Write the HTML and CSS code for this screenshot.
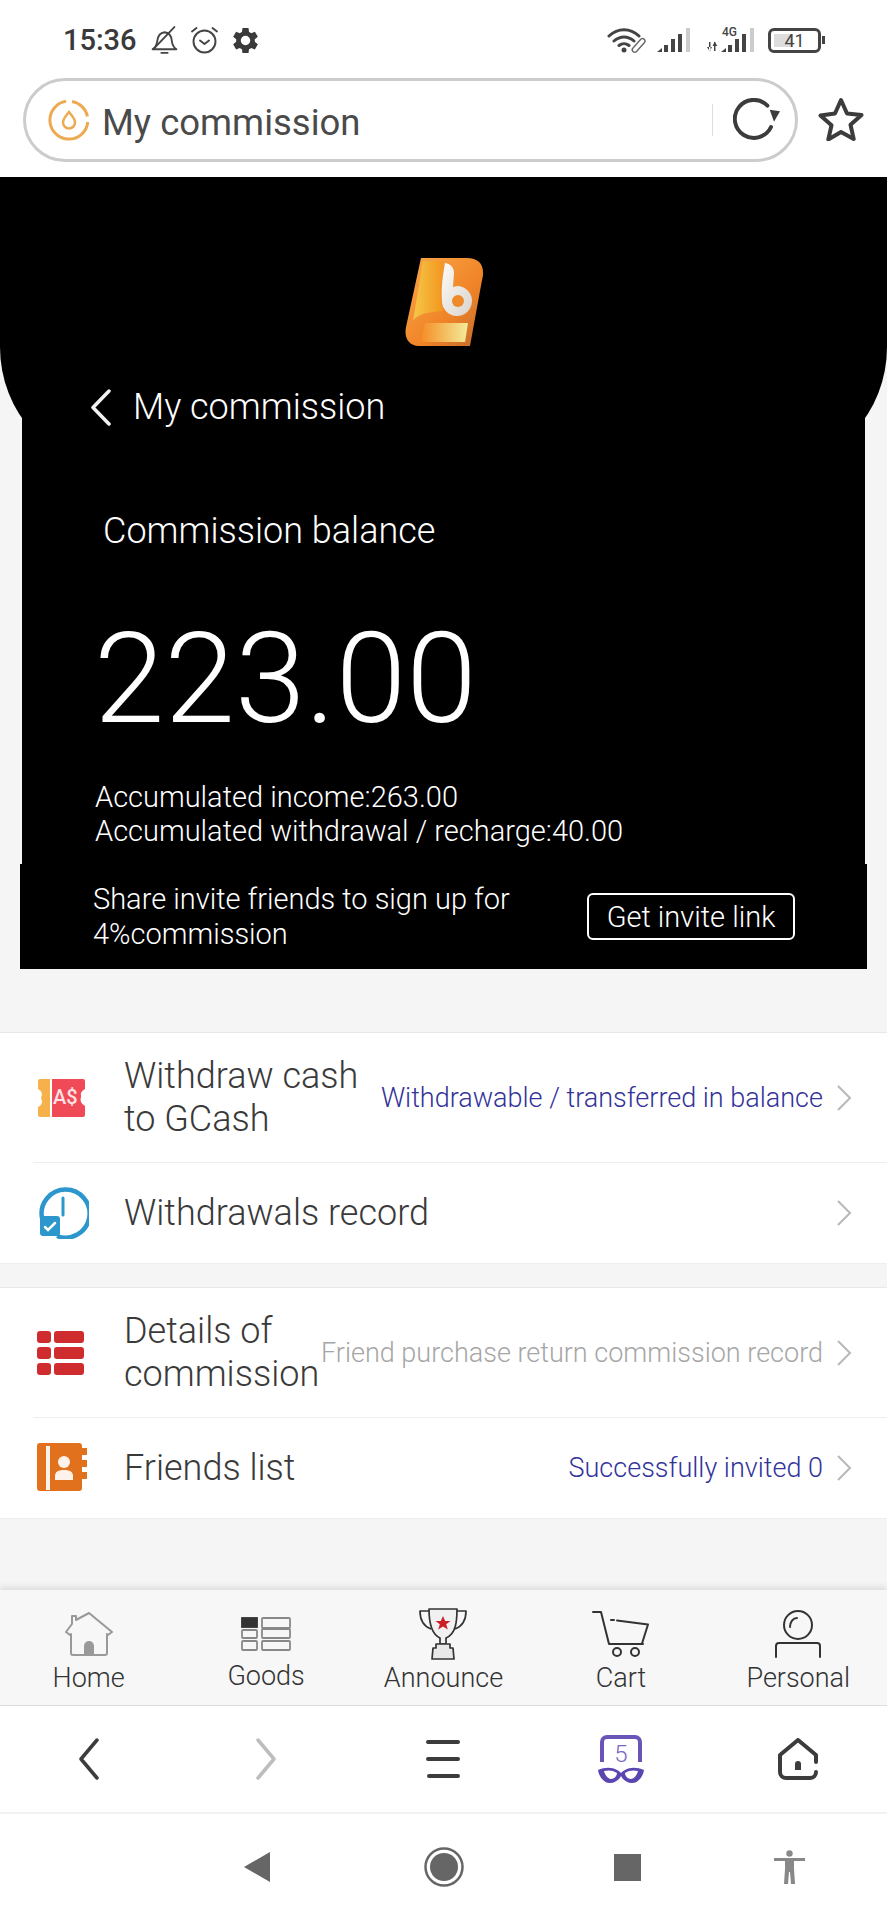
FILE: index.html
```html
<!DOCTYPE html>
<html lang="en">
<head>
    <meta charset="UTF-8">
    <meta name="viewport" content="width=device-width, initial-scale=1.0">
    <title>My commission</title>
    <link rel="stylesheet" href="styles.css">
</head>
<body>
    <div class="status-bar">
        <span class="clock">15:36</span>
        <svg class="st-bell" width="29" height="29" viewBox="1 0 25 28" fill="none" stroke="#444" stroke-width="1.800" stroke-linejoin="round" stroke-linecap="round"><path d="M2 22.500c3-2 4-4 4.500-8 .6-5 3-8 7-8.500 4 .3 6.500 3 7 8 .4 4 1.500 6.500 4.500 8.500z"/><path d="M23 1 3 22"/><path d="M10.500 26h6"/></svg>
        <svg class="st-alarm" width="29" height="28" viewBox="1 0 27 28" fill="none" stroke="#444" stroke-width="1.900" stroke-linecap="round" stroke-linejoin="round"><circle cx="14.500" cy="15.500" r="11"/><path d="m10 14.500 4.500 3.500 4.500-3.500"/><path d="M2 5.500 6.500 2M27 5.500 22.500 2"/></svg>
        <svg class="st-gear" width="25" height="25" viewBox="2 2 20 20"><path fill="#3a3a3a" fill-rule="evenodd" d="M19.400 13c.04-.33.06-.66.06-1s-.02-.67-.06-1l2.500-1.950-2.400-4.150-2.950 1.200a7.600 7.600 0 0 0-1.730-1L14.400 2H9.600l-.42 3.100a7.600 7.600 0 0 0-1.730 1L4.500 4.900 2.100 9.050 4.600 11a8 8 0 0 0 0 2l-2.500 1.950 2.400 4.150 2.950-1.200c.53.4 1.110.74 1.730 1L9.600 22h4.800l.42-3.100c.62-.26 1.200-.6 1.730-1l2.950 1.200 2.400-4.150zM12 15.800a3.800 3.800 0 1 1 0-7.600 3.800 3.800 0 0 1 0 7.600z"/></svg>
        <span class="status-right">
            <svg width="40" height="26" viewBox="0 0 40 26" fill="none" stroke="#444" stroke-linecap="round"><path stroke-width="3" d="M2 9c9-8.500 21-8.500 30 0M7 14c6-5.500 14-5.500 20 0M12 18.500c3-2.500 7-2.500 10 0"/><circle cx="17" cy="23" r="2.500" fill="#444" stroke="none"/><path stroke-width="1.400" stroke="#666" d="m27 24 8-9a2.500 2.500 0 0 1 3.500 3.500l-8 9a2 2 0 0 1-3.500-3.500z" transform="translate(-1 -3)"/></svg>
            <svg class="st-signal" width="34" height="25" viewBox="0 0 34 25"><path fill="#444" d="M0 24l5-4v4zM7 17h4v7H7zM14 11h4v13h-4zM21 6h4v18h-4z"/><path fill="#ccc" d="M29 0h4v24h-4z"/></svg>
            <span class="net-group">
                <span class="net-label">4G</span>
                <svg width="48" height="25" viewBox="0 0 48 25"><path fill="#444" d="M2 14h1.500v9H2zM0 19l2.700 4.500L5 19zM7 14h1.500v9H7zM5.500 18l2.300-4.500 2.500 4.500zM14 24l5-4v4zM21 17h4v7h-4zM28 11h4v13h-4zM35 6h4v18h-4z"/><path fill="#ccc" d="M43 0h4v24h-4z"/></svg>
            </span>
            <span class="battery"><span class="battery-fill"></span><span class="battery-num">41</span></span>
            <span class="battery-nub"></span>
        </span>
    </div>

    <div class="url-row">
        <div class="url-pill">
            <svg class="url-icon" width="42" height="42" viewBox="0 0 42 42" fill="none" stroke="#edaa52"><path stroke-width="3" d="M24 2.500a19 19 0 0 1 15.500 15M39.800 23A19 19 0 1 1 18 2.300"/><path stroke-width="2.500" d="M21 13c3 4 6 6.500 6 10.500a6 6 0 0 1-12 0C15 19.500 18 17 21 13z"/></svg>
            <span class="url-text">My commission</span>
            <span class="url-divider"></span>
            <svg class="url-reload" width="48" height="44" viewBox="0 0 48 44" fill="none" stroke="#3c3c3c" stroke-width="4" stroke-linecap="round"><path d="M38 29A19 19 0 1 1 34.400 7.600"/><path fill="#3c3c3c" stroke="none" d="M36.700 11.700 47 13.300 41 23.700z"/></svg>
        </div>
        <svg class="url-star" width="46" height="44" viewBox="0 0 46 44" fill="none" stroke="#3c3c3c" stroke-width="4" stroke-linejoin="round"><path d="m23 3 6 13.500 14.500 1.500-11 9.800 3.200 14.200L23 35l-12.700 7.500 3.200-14.200-11-9.800L17 16.500z"/></svg>
    </div>

    <div class="hero">
        <svg class="hero-logo" width="79" height="90" viewBox="0 0 79 90">
            <defs>
                <linearGradient id="logoBase" x1="0" y1="0" x2="1" y2="1"><stop offset="0" stop-color="#f9a94a"/><stop offset=".6" stop-color="#f08427"/><stop offset="1" stop-color="#c26a2c"/></linearGradient>
                <linearGradient id="logoCol" x1="0" y1="0" x2="1" y2="0"><stop offset="0" stop-color="#f6c848"/><stop offset="1" stop-color="#f2961f"/></linearGradient>
                <linearGradient id="logoBand" x1="0" y1="0" x2="1" y2="0"><stop offset="0" stop-color="#f58d25"/><stop offset="1" stop-color="#f3ec9a"/></linearGradient>
                <linearGradient id="logoB" x1="0" y1="0" x2="1" y2="1"><stop offset="0" stop-color="#fdfcf9"/><stop offset="1" stop-color="#d9d3cc"/></linearGradient>
            </defs>
            <path fill="url(#logoBase)" d="M16 1h46c11 0 17 6 16 17l-3 16-10 55H14C3 89-1 80 1 70z"/>
            <path fill="url(#logoCol)" d="M18 4h20c-3 20-4 36 0 50-14 1-26 3-30 10z"/>
            <path fill="url(#logoBand)" d="M20 66h43l-3 19H16z"/>
            <path fill="url(#logoB)" d="M40 6c6 1 9 5 9 10l-1 14c1 0 3-1 5-1a15 15 0 1 1-16 15C36 30 38 18 40 6z"/>
            <circle cx="53" cy="44" r="6" fill="#ee8a2a"/>
        </svg>
        <div class="hero-title">
            <svg width="22" height="37" viewBox="0 0 22 37" fill="none" stroke="#f2f2f2" stroke-width="3.500" stroke-linecap="round" stroke-linejoin="round"><path d="M19 2 3 18.500 19 35"/></svg>
            <span>My commission</span>
        </div>
        <div class="balance-label">Commission balance</div>
        <div class="balance-num">223.00</div>
        <div class="balance-sub">
            <div>Accumulated income:263.00</div>
            <div>Accumulated withdrawal / recharge:40.00</div>
        </div>
    </div>
    <div class="invite">
        <div class="invite-text">Share invite friends to sign up for 4%commission</div>
        <div class="invite-btn">Get invite link</div>
    </div>

    <main class="lists">
        <section class="group">
            <div class="row">
                <div class="row-icon">
                    <svg width="50" height="38" viewBox="0 0 50 38">
                        <path fill="#f7b14a" d="M3 0h10v38H3a2 2 0 0 1-2-2v-8a6 6 0 0 0 3-9 6 6 0 0 0-3-9V2a2 2 0 0 1 2-2z"/>
                        <path fill="#f04a58" d="M15 0h31a2 2 0 0 1 2 2v8a7 7 0 0 0-4 8 7 7 0 0 0 4 9v9a2 2 0 0 1-2 2H15z"/>
                        <text class="ticket-text" x="16" y="25">A$</text>
                    </svg>
                </div>
                <div class="row-title">Withdraw cash to GCash</div>
                <div class="row-note note-blue">Withdrawable / transferred in balance</div>
                <svg class="chev" width="16" height="26" viewBox="0 0 16 26" fill="none" stroke="#b8b8b8" stroke-width="2"><path d="m2 1 12 12L2 25"/></svg>
            </div>
            <div class="row">
                <div class="row-icon">
                    <svg width="52" height="52" viewBox="0 0 52 52" fill="none">
                        <path stroke="#2b97cd" stroke-width="4.500" d="M5 31A24 24 0 1 1 20 49"/>
                        <path stroke="#2b97cd" stroke-width="3" stroke-linecap="round" d="M26 11v17"/>
                        <rect x="3" y="29" width="20" height="20" rx="3" fill="#2b97cd"/>
                        <path stroke="#fff" stroke-width="2.500" stroke-linecap="round" d="m8 40 3 3 7-7"/>
                    </svg>
                </div>
                <div class="row-title">Withdrawals record</div>
                <svg class="chev" width="16" height="26" viewBox="0 0 16 26" fill="none" stroke="#b8b8b8" stroke-width="2"><path d="m2 1 12 12L2 25"/></svg>
            </div>
        </section>
        <section class="group">
            <div class="row">
                <div class="row-icon">
                    <svg width="47" height="44" viewBox="0 0 47 44" fill="#cf2c2f">
                        <rect width="14" height="12" rx="3"/><rect x="17" width="30" height="12" rx="3"/>
                        <rect y="16" width="14" height="12" rx="3"/><rect x="17" y="16" width="30" height="12" rx="3"/>
                        <rect y="32" width="14" height="12" rx="3"/><rect x="17" y="32" width="30" height="12" rx="3"/>
                    </svg>
                </div>
                <div class="row-title">Details of commission</div>
                <div class="row-note note-gray">Friend purchase return commission record</div>
                <svg class="chev" width="16" height="26" viewBox="0 0 16 26" fill="none" stroke="#b8b8b8" stroke-width="2"><path d="m2 1 12 12L2 25"/></svg>
            </div>
            <div class="row">
                <div class="row-icon">
                    <svg width="50" height="50" viewBox="0 0 50 50">
                        <path fill="#e2711d" d="M3 0h39a3 3 0 0 1 3 3v2h5v7h-5v5h5v7h-5v5h5v7h-5v9a3 3 0 0 1-3 3H3a3 3 0 0 1-3-3V3a3 3 0 0 1 3-3z"/>
                        <path fill="#fdf3ea" d="M9 3h4v44H9z"/>
                        <circle cx="27" cy="19" r="6" fill="#fdf3ea"/>
                        <path fill="#fdf3ea" d="M18 37v-4c0-4 3-6 9-6s9 2 9 6v4z"/>
                    </svg>
                </div>
                <div class="row-title">Friends list</div>
                <div class="row-note note-blue">Successfully invited 0</div>
                <svg class="chev" width="16" height="26" viewBox="0 0 16 26" fill="none" stroke="#b8b8b8" stroke-width="2"><path d="m2 1 12 12L2 25"/></svg>
            </div>
        </section>
    </main>

    <nav class="tabbar">
        <div class="tab">
            <div class="tab-icon">
                <svg width="48" height="44" viewBox="0 0 48 44" fill="none" stroke="#999" stroke-width="2" stroke-linejoin="round" stroke-linecap="round"><path d="M7 12V4h4v4L24 1l23 19-4 3-1-1v19a2 2 0 0 1-2 2H8a2 2 0 0 1-2-2V22l-1 1-4-3z"/><path fill="#999" stroke="none" d="M19 43V34a5 5 0 0 1 10 0v9z"/></svg>
            </div>
            <span>Home</span>
        </div>
        <div class="tab tab-goods">
            <div class="tab-icon">
                <svg width="50" height="34" viewBox="0 0 50 34" fill="none" stroke="#888" stroke-width="1.800"><rect x="1" y="1" width="15" height="9" fill="#333" stroke="#333"/><rect x="1" y="13" width="15" height="8" rx="1"/><rect x="1" y="24" width="15" height="9" rx="1"/><rect x="21" y="1" width="28" height="10" rx="1"/><rect x="21" y="12" width="28" height="9" rx="1"/><rect x="21" y="24" width="28" height="9" rx="1"/></svg>
            </div>
            <span>Goods</span>
        </div>
        <div class="tab">
            <div class="tab-icon">
                <svg width="50" height="52" viewBox="0 0 50 52" fill="none" stroke="#333" stroke-width="1.700" stroke-linejoin="round"><path fill="#f1f1f1" d="M11 1h28c0 12-1 25-11 29v6h-6v-6C13 26 11 13 11 1z"/><path d="M11 3H2c0 9 3 15 11 18M39 3h9c0 9-3 15-11 18"/><path fill="#e8e8e8" d="M18 36h14v4h3l1 11H14l1-11h3z"/><path fill="#cc1f28" stroke="none" d="m25 8 2.200 5h5.300l-4.300 3.300 1.600 5.200-4.800-3-4.800 3 1.600-5.200-4.300-3.300h5.300z"/></svg>
            </div>
            <span>Announce</span>
        </div>
        <div class="tab">
            <div class="tab-icon">
                <svg width="58" height="48" viewBox="0 0 58 48" fill="none" stroke="#333" stroke-width="2" stroke-linecap="round" stroke-linejoin="round"><path d="M1 2h8l8 32h34"/><path d="M19 10h3M25 10.500l31 4-6 19"/><circle cx="25" cy="42" r="4"/><circle cx="43" cy="42" r="4"/></svg>
            </div>
            <span>Cart</span>
        </div>
        <div class="tab">
            <div class="tab-icon">
                <svg width="48" height="48" viewBox="0 0 48 48" fill="none" stroke="#333" stroke-width="2"><circle cx="24" cy="15" r="14"/><path stroke-linecap="round" d="M16 17c0-5 3-9 7-9"/><path stroke-linecap="round" d="M2 47V36a3 3 0 0 1 3-3h38a3 3 0 0 1 3 3v11"/></svg>
            </div>
            <span>Personal</span>
        </div>
    </nav>

    <nav class="browser-nav">
        <svg width="20" height="42" viewBox="0 0 20 42" fill="none" stroke="#3c3c3c" stroke-width="3.500" stroke-linecap="round" stroke-linejoin="round"><path d="M18 2 2 21l16 19"/></svg>
        <svg width="20" height="42" viewBox="0 0 20 42" fill="none" stroke="#bdbdbd" stroke-width="3.500" stroke-linecap="round" stroke-linejoin="round"><path d="m2 2 16 19L2 40"/></svg>
        <svg width="34" height="38" viewBox="0 0 34 38" fill="none" stroke="#3c3c3c" stroke-width="4" stroke-linecap="round"><path d="M2 2h30M2 19h30M3 36h29"/></svg>
        <span class="tabs-count">
            <svg width="46" height="49" viewBox="0 0 46 49" fill="none" stroke="#5b45b0"><path stroke-width="4" stroke="#6a54b8" d="M4 27V7a5 5 0 0 1 5-5h28a5 5 0 0 1 5 5v20"/><path fill="#5b45b0" stroke="none" fill-rule="evenodd" d="M0 35c7-3 14-3 19 0 2 1 3 2 4 3 1-1 2-2 4-3 5-3 12-3 19 0-1 7-6 13-12 13-5 0-9-3-11-7-2 4-6 7-11 7-6 0-11-6-12-13zm6 1c1 4 4 8 7 8 3 0 6-3 6-6-4-3-9-3-13-2zm34 0c-4-1-9-1-13 2 0 3 3 6 6 6 3 0 6-4 7-8z"/></svg>
            <span>5</span>
        </span>
        <svg width="40" height="42" viewBox="0 0 40 42" fill="none" stroke="#3c3c3c" stroke-width="4" stroke-linecap="round" stroke-linejoin="round"><path d="M38 24v-7L20 2 2 17v17a6 6 0 0 0 6 6h24a6 6 0 0 0 6-6"/><path fill="#3c3c3c" stroke="none" d="M17 32v-6a3 3 0 0 1 6 0v6z"/></svg>
    </nav>

    <nav class="sys-nav">
        <svg class="sys-back" width="26" height="30" viewBox="0 0 26 30"><path fill="#666" d="M0 15 26 0v30z"/></svg>
        <svg class="sys-home" width="40" height="40" viewBox="0 0 40 40"><circle cx="20" cy="20" r="18.500" fill="none" stroke="#666" stroke-width="2.500"/><circle cx="20" cy="20" r="14" fill="#666"/></svg>
        <svg class="sys-recent" width="27" height="27" viewBox="0 0 27 27"><rect width="27" height="27" fill="#666"/></svg>
        <svg class="sys-access" width="31" height="34" viewBox="0 0 31 34"><circle cx="15.500" cy="3.500" r="3.200" fill="#888"/><path fill="#888" d="M0 8h31v3H20v8l1 15h-4l-1-12h-1l-1 12h-4l1-15v-8H0z"/></svg>
    </nav>
</body>
</html>
```

FILE: styles.css
```css
* {
    margin: 0;
    padding: 0;
    box-sizing: border-box;
}

body {
    width: 887px;
    height: 1920px;
    display: flex;
    flex-direction: column;
    overflow: hidden;
    background: #f5f5f5;
    font-family: Roboto, "Liberation Sans", sans-serif;
    color: #333;
}

svg {
    display: block;
    flex-shrink: 0;
}

/* status bar */
.status-bar {
    height: 78px;
    background: #fff;
    display: flex;
    align-items: center;
    padding: 2px 0 0 63px;
}

.clock {
    width: 73px;
    font-size: 29px;
    font-weight: 500;
    color: #3a3a3a;
}

.st-bell { margin-left: 14px; }
.st-alarm { margin-left: 11px; }
.st-gear { margin-left: 14px; }

.status-right {
    margin-left: auto;
    display: flex;
    align-items: center;
    padding-right: 62px;
}

.st-signal { margin-left: 10px; }

.net-group {
    position: relative;
    margin-left: 16px;
}

.net-label {
    position: absolute;
    left: 15px;
    top: -3px;
    font-size: 12px;
    font-weight: 500;
    color: #444;
}

.battery {
    position: relative;
    margin-left: 13px;
    width: 53px;
    height: 25px;
    border: 3px solid #444;
    border-radius: 6px;
    display: flex;
    align-items: center;
    justify-content: center;
}

.battery-fill {
    position: absolute;
    left: 3px;
    top: 3px;
    bottom: 3px;
    width: 19px;
    background: #ddd;
}

.battery-num {
    position: relative;
    font-size: 18px;
    color: #444;
}

.battery-nub {
    width: 3px;
    height: 8px;
    margin-left: 1px;
    background: #444;
}

/* url bar */
.url-row {
    height: 99px;
    background: #fff;
    display: flex;
    padding-left: 23px;
}

.url-pill {
    width: 775px;
    height: 84px;
    border: 3px solid #ccc;
    border-radius: 42px;
    display: flex;
    align-items: center;
    padding-left: 22px;
}

.url-text {
    margin: 4px 0 0 12px;
    font-size: 36.500px;
    color: #4a4a4a;
}

.url-divider {
    width: 1px;
    height: 32px;
    margin-left: auto;
    background: #ddd;
}

.url-reload {
    margin: 0 14px 0 20px;
}

.url-star {
    margin: 19px 0 0 20px;
}

/* black header */
.hero {
    position: relative;
    margin: 0 22px;
    height: 687px;
    background: #000;
    color: #fff;
    font-weight: 300;
    display: flex;
    flex-direction: column;
}

.hero::before {
    content: "";
    position: absolute;
    left: -22px;
    right: -22px;
    top: 0;
    height: 290px;
    background: #000;
    border-radius: 0 0 113px 113px / 0 0 120px 120px;
}

.hero > * {
    position: relative;
}

.hero-logo {
    margin: 80px 0 0 383px;
}

.hero-title {
    display: flex;
    align-items: center;
    margin: 39px 0 0 68px;
    font-size: 36px;
}

.hero-title span {
    margin-left: 21px;
}

.balance-label {
    margin: 82px 0 0 81px;
    font-size: 36px;
}

.balance-num {
    margin: 63px 0 0 72px;
    font-size: 127px;
    line-height: 127px;
}

.balance-sub {
    margin: 38px 0 0 73px;
    font-size: 29px;
    line-height: 34px;
}

.invite {
    margin: 0 20px;
    height: 105px;
    background: #000;
    color: #fff;
    font-weight: 300;
    display: flex;
    align-items: center;
    padding-left: 73px;
}

.invite-text {
    width: 440px;
    font-size: 29px;
    line-height: 35px;
}

.invite-btn {
    margin: 0 0 0 54px;
    width: 208px;
    height: 47px;
    border: 2px solid #fff;
    border-radius: 6px;
    display: flex;
    align-items: center;
    justify-content: center;
    font-size: 29px;
}

/* list groups */
.lists {
    flex: 1;
    padding-top: 63px;
    font-weight: 300;
}

.group {
    background: #fff;
    border-top: 1px solid #e8e8e8;
    border-bottom: 1px solid #eee;
    margin-bottom: 23px;
    padding-left: 33px;
}

.row {
    display: flex;
    align-items: center;
    min-height: 100px;
    padding-right: 35px;
    border-bottom: 1px solid #eee;
}

.row:first-child {
    height: 130px;
}

.row:last-child {
    border-bottom: none;
}

.row-icon {
    width: 91px;
    flex-shrink: 0;
    padding-left: 4px;
}

.row-title {
    flex: 1;
    min-width: 0;
    font-size: 36px;
    line-height: 43px;
    color: #3a3a3a;
}

.row-note {
    flex-shrink: 0;
    white-space: nowrap;
    font-size: 27px;
}

.note-blue { color: #33339a; }
.note-gray { color: #a6a6a6; }

.chev {
    margin-left: 13px;
}

.ticket-text {
    font-family: Roboto, sans-serif;
    font-size: 20px;
    font-weight: 500;
    fill: #fbe3e3;
}

/* bottom tabs */
.tabbar {
    height: 116px;
    background: #f7f7f7;
    border-bottom: 1px solid #ddd;
    box-shadow: 0 -3px 6px rgba(0, 0, 0, 0.1);
    display: grid;
    grid-template-columns: repeat(5, 1fr);
    font-weight: 300;
}

.tab {
    display: flex;
    flex-direction: column;
    align-items: center;
    padding-top: 17px;
    font-size: 27px;
    color: #333;
}

.tab-icon {
    height: 54px;
    display: flex;
    align-items: center;
    justify-content: center;
    margin-bottom: 1px;
}

.tab-goods span {
    margin-top: -2px;
}

/* browser nav */
.browser-nav {
    height: 108px;
    background: #fff;
    border-bottom: 2px solid #f2f2f2;
    display: grid;
    grid-template-columns: repeat(5, 1fr);
    justify-items: center;
    align-items: center;
}

.tabs-count {
    position: relative;
}

.tabs-count span {
    position: absolute;
    left: 0;
    right: 0;
    top: 5px;
    text-align: center;
    font-size: 24px;
    font-weight: 300;
    color: #7a68c0;
}

/* system nav */
.sys-nav {
    height: 106px;
    background: #fff;
    display: flex;
    align-items: center;
    padding-left: 244px;
}

.sys-home { margin-left: 154px; }
.sys-recent { margin-left: 150px; }
.sys-access { margin-left: 133px; }
```
